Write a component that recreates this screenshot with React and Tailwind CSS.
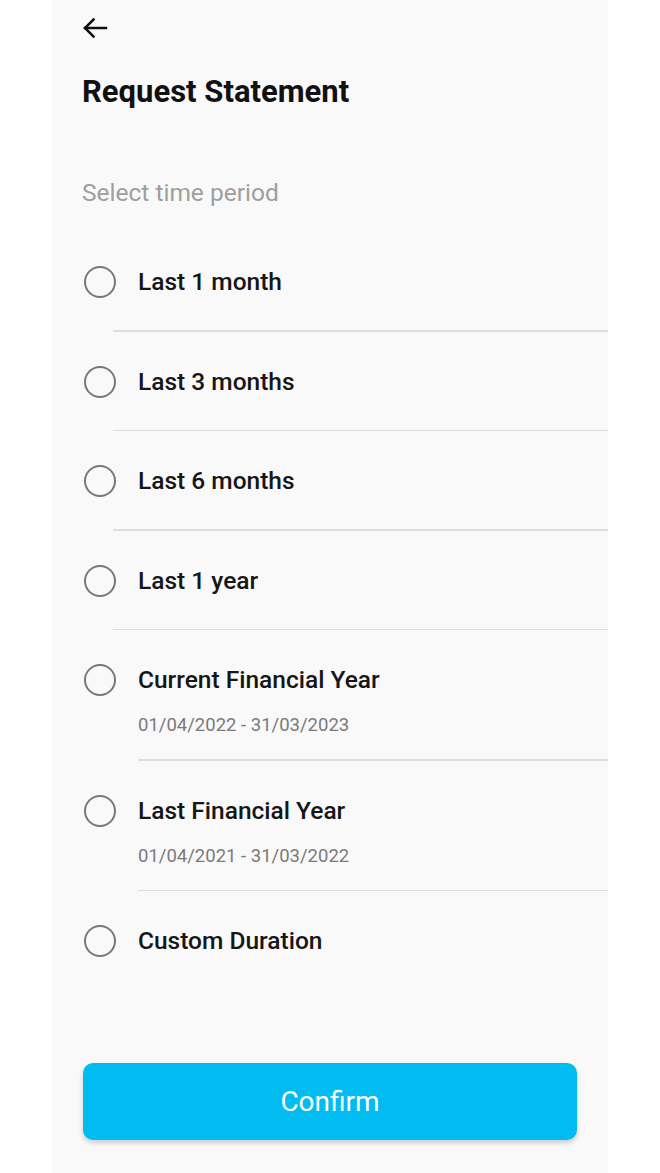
import React from "react";

const options = [
  { label: "Last 1 month", inset: "ml-[31px]" },
  { label: "Last 3 months", inset: "ml-[31px]" },
  { label: "Last 6 months", inset: "ml-[31px]" },
  { label: "Last 1 year", inset: "ml-[31px]" },
  { label: "Current Financial Year", sub: "01/04/2022 - 31/03/2023", inset: "ml-[56px]" },
  { label: "Last Financial Year", sub: "01/04/2021 - 31/03/2022", inset: "ml-[56px]" },
  { label: "Custom Duration" },
];

function Option({ item }) {
  return (
    <div>
      <div className={item.sub ? "pt-[35px] pb-[23px]" : "pt-[35px] pb-[33px]"}>
        <div className="flex items-center h-[30px]">
          <span className="ml-[2px] w-[32px] h-[32px] rounded-full border-[2.5px] border-[#787878] shrink-0" />
          <span className="ml-[22px] text-[24.5px] leading-[30px] font-medium text-[#161616]">
            {item.label}
          </span>
        </div>
        {item.sub && (
          <div className="ml-[56px] mt-[19px] text-[18.5px] leading-[22px] text-[#7a7a7a]">
            {item.sub}
          </div>
        )}
      </div>
      {item.inset && <div className={`${item.inset} h-[1.5px] bg-[#dedede]`} />}
    </div>
  );
}

export default function App() {
  return (
    <div className="bg-white min-h-screen" style={{ fontFamily: "Roboto, 'Noto Sans', sans-serif" }}>
      <div className="mx-auto w-[556px] min-h-[1173px] bg-[#f9f9f9] flex flex-col">
        <div className="pl-[30px]">
          <div className="h-[56px] flex items-center">
            <svg width="26" height="22" viewBox="0 0 26 22" fill="none" stroke="#111" strokeWidth="2.5" strokeLinecap="square">
              <path d="M24 11H3" />
              <path d="M11.5 2.5L3 11l8.5 8.5" />
            </svg>
          </div>
          <h1 className="mt-[18px] text-[31px] leading-[36px] font-bold text-[#111]">Request Statement</h1>
          <p className="mt-[68px] text-[24.5px] leading-[30px] text-[#9e9e9e]">Select time period</p>
          <div className="mt-[24px]">
            {options.map((o) => (
              <Option key={o.label} item={o} />
            ))}
          </div>
        </div>
        <div className="mt-auto mb-[33px] mx-[31px]">
          <button className="w-full h-[77px] rounded-[10px] bg-[#00bcf0] text-white text-[28px] shadow-[0_3px_5px_rgba(0,0,0,0.18)]">
            Confirm
          </button>
        </div>
      </div>
    </div>
  );
}
